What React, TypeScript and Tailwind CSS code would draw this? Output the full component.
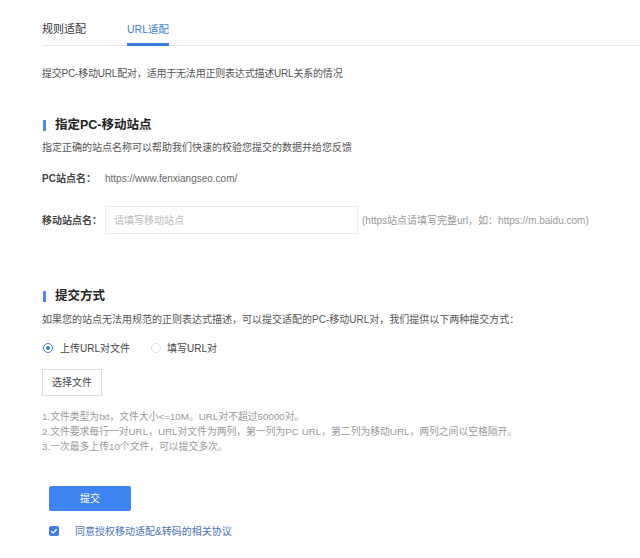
import React from "react";

const font = { fontFamily: '"Liberation Sans", "Noto Sans CJK SC", sans-serif' };

function Heading({ children }: { children: React.ReactNode }) {
  return (
    <div className="flex items-center h-[18px]">
      <div className="w-[3px] h-[11px] bg-[#4f8be6] ml-px mr-[9px]" />
      <div className="text-[12.5px] leading-[18px] font-bold text-[#222]">{children}</div>
    </div>
  );
}

export default function App() {
  return (
    <div className="w-[640px] h-[558px] bg-white overflow-hidden text-[#555]" style={font}>
      <div className="pl-[42px]">
        {/* tabs */}
        <div className="flex border-b border-[#e9e9e9]">
          <div className="pt-[22px] pb-[7px] text-[11px] leading-[14px] text-[#333] border-b-[3px] border-transparent -mb-px">
            规则适配
          </div>
          <div className="ml-[41px] pt-[22px] pb-[7px] text-[10.5px] leading-[14px] text-[#3b7ddd] border-b-[3px] border-[#3b7ddd] -mb-px">
            URL适配
          </div>
        </div>

        <div className="mt-[21px] text-[10px] leading-[14px] text-[#555] tracking-[-0.2px]">
          提交PC-移动URL配对，适用于无法用正则表达式描述URL关系的情况
        </div>

        <div className="mt-[35px]">
          <Heading>指定PC-移动站点</Heading>
        </div>
        <div className="mt-[7px] text-[10px] leading-[14px] text-[#555]">
          指定正确的站点名称可以帮助我们快速的校验您提交的数据并给您反馈
        </div>

        <div className="mt-[17px] flex items-center text-[10px] leading-[14px]">
          <div className="w-[63px] font-bold text-[#444]">PC站点名：</div>
          <div className="text-[#666]">https://www.fenxiangseo.com/</div>
        </div>

        <div className="mt-[20px] flex items-center text-[10px]">
          <div className="w-[63px] font-bold text-[#444]">移动站点名：</div>
          <div className="w-[253px] h-[28px] border border-[#ebebeb] flex items-center pl-[8px] text-[#bbb]">
            请填写移动站点
          </div>
          <div className="ml-[4px] text-[#999]">(https站点请填写完整url，如：https://m.baidu.com)</div>
        </div>

        <div className="mt-[53px]">
          <Heading>提交方式</Heading>
        </div>
        <div className="mt-[8px] text-[10px] leading-[14px] text-[#555]">
          如果您的站点无法用规范的正则表达式描述，可以提交适配的PC-移动URL对，我们提供以下两种提交方式：
        </div>

        <div className="mt-[14px] flex items-center h-[14px] text-[10px] text-[#444]">
          <div className="w-[10px] h-[10px] rounded-full border border-[#3b7ddd] flex items-center justify-center ml-px">
            <div className="w-[4px] h-[4px] rounded-full bg-[#3b7ddd]" />
          </div>
          <div className="ml-[7px]">上传URL对文件</div>
          <div className="ml-[21px] w-[10px] h-[10px] rounded-full border border-[#e2e2e2]" />
          <div className="ml-[6px]">填写URL对</div>
        </div>

        <div className="mt-[14px] w-[60px] h-[27px] border border-[#dcdcdc] flex items-center justify-center text-[10px] text-[#444]">
          选择文件
        </div>

        <div className="mt-[13px] text-[9.8px] leading-[15px] text-[#999]">
          <div>1.文件类型为txt，文件大小&lt;=10M。URL对不超过50000对。</div>
          <div>2.文件要求每行一对URL，URL对文件为两列，第一列为PC URL，第二列为移动URL，两列之间以空格隔开。</div>
          <div>3.一次最多上传10个文件，可以提交多次。</div>
        </div>

        <div className="mt-[32px] ml-[7px] w-[82px] h-[25px] rounded-[2px] bg-[#3f84f0] flex items-center justify-center text-[10px] text-white">
          提交
        </div>

        <div className="mt-[13px] ml-[7px] flex items-center h-[14px]">
          <div className="w-[10px] h-[10px] rounded-[2px] bg-[#3f7de0] flex items-center justify-center">
            <svg width="8" height="8" viewBox="0 0 8 8">
              <path d="M1.3 4.1 L3.2 5.9 L6.7 2.2" stroke="white" strokeWidth="1.3" fill="none" />
            </svg>
          </div>
          <div className="ml-[16px] text-[10px] text-[#4a72b8]">同意授权移动适配&amp;转码的相关协议</div>
        </div>
      </div>
    </div>
  );
}
